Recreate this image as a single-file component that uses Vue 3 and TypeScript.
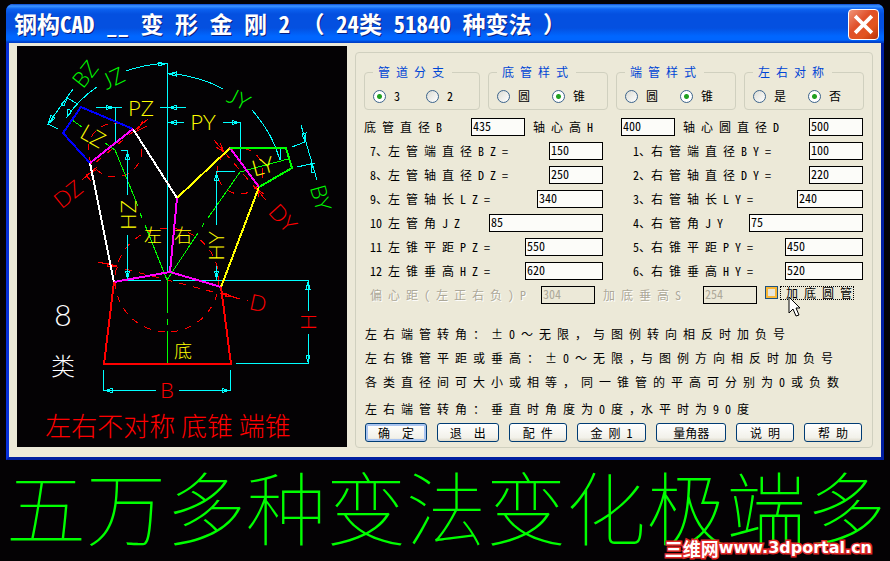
<script setup lang="ts">
import { reactive, ref } from 'vue'

interface Group {
  name: string
  title: string
  options: string[]
}

interface Field {
  id: string
  label: string
  size: string
}

const groups: Group[] = [
  { name: 'branch', title: '管 道 分 支', options: ['3', '2'] },
  { name: 'base', title: '底 管 样 式', options: ['圆', '锥'] },
  { name: 'end', title: '端 管 样 式', options: ['圆', '锥'] },
  { name: 'symmetry', title: '左 右 对 称', options: ['是', '否'] },
]

const picked = reactive<Record<string, string>>({
  branch: '3',
  base: '锥',
  end: '锥',
  symmetry: '否',
})

const values = reactive<Record<string, string>>({
  b: '435', h: '400', d: '500',
  bz: '150', dz: '250', lz: '340', jz: '85', pz: '550', hz: '620',
  by: '100', dy: '220', ly: '240', jy: '75', py: '450', hy: '520',
  p: '304', s: '254',
})

const leftFields: Field[] = [
  { id: 'bz', label: '7、左 管 端 直 径 B Z =', size: 's' },
  { id: 'dz', label: '8、左 管 轴 直 径 D Z =', size: 's' },
  { id: 'lz', label: '9、左 管 轴 长 L Z =', size: 'm' },
  { id: 'jz', label: '10 左 管 角 J Z', size: 'xl' },
  { id: 'pz', label: '11 左 锥 平 距 P Z =', size: 'l' },
  { id: 'hz', label: '12 左 锥 垂 高 H Z =', size: 'l' },
]

const rightFields: Field[] = [
  { id: 'by', label: '1、右 管 端 直 径 B Y =', size: 's' },
  { id: 'dy', label: '2、右 管 轴 直 径 D Y =', size: 's' },
  { id: 'ly', label: '3、右 管 轴 长 L Y =', size: 'm' },
  { id: 'jy', label: '4、右 管 角 J Y', size: 'xl' },
  { id: 'py', label: '5、右 锥 平 距 P Y =', size: 'l' },
  { id: 'hy', label: '6、右 锥 垂 高 H Y =', size: 'l' },
]

const notes: string[] = [
  '左 右 端 管 转 角 ： ± 0 ～ 无 限 ， 与 图 例 转 向 相 反 时 加 负 号',
  '左 右 锥 管 平 距 或 垂 高 ： ± 0 ～ 无 限 ，与 图 例 方 向 相 反 时 加 负 号',
  '各 类 直 径 间 可 大 小 或 相 等 ， 同 一 锥 管 的 平 高 可 分 别 为 0 或 负 数',
  '左 右 端 管 转 角 ： 垂 直 时 角 度 为 0 度 ，水 平 时 为 9 0 度',
]

const buttons = [
  { text: '确  定', size: 'mid', primary: true },
  { text: '退  出', size: 'mid', primary: false },
  { text: '配 件', size: 'small', primary: false },
  { text: '金 刚 1', size: 'large', primary: false },
  { text: '量角器', size: 'large', primary: false },
  { text: '说 明', size: 'small', primary: false },
  { text: '帮 助', size: 'small', primary: false },
]

const addBase = ref(false)
</script>

<template>
  <div class="screen">
    <section class="window">
      <header class="titlebar">
        <h1>钢构CAD __ 变 形 金 刚 2 （ 24类 51840 种变法 ）</h1>
        <button class="close" type="button" aria-label="关闭">
          <svg viewBox="0 0 31 31" aria-hidden="true">
            <path d="M8 8 L23 23 M23 8 L8 23" />
          </svg>
        </button>
      </header>

      <div class="body">
        <svg class="drawing" viewBox="17 46 330 401" role="img" aria-label="左右不对称 底锥 端锥">
          <g class="thin red dash">
            <circle cx="167" cy="280" r="52" />
            <circle cx="115" cy="150" r="27" />
            <circle cx="240" cy="171" r="23" />
            <path d="M98 262 L248 301" />
            <path d="M134 131 L95 163" />
            <path d="M225 153 L271 206" />
          </g>
          <g class="thin red">
            <path d="M148 119 L134 131 M143 121 L137 131 L147 126 M97 167 L82 180 M96 170 L86 175 L91 181" />
            <path d="M214 140 L225 153 M216 147 L224 152 L220 143 M256 188 L264 198 M258 190 L258 197 M258 190 L264 194" />
            <path d="M98 262 L117 266 M107 263 L107 267 L116 266 Z M222 293 L234 297 M225 293 L225 297 L231 296 Z" />
          </g>

          <g class="thin green">
            <path d="M72 120 L82 127 M105 143 L115 150 L138 206 M140 213 L142 218 M145 225 L167 280" />
            <path d="M288 159 L240 172 L208 218 M204 223 L202 227 M198 233 L167 280" />
            <path d="M167.500 279 V313 M167.500 319 V325 M167.500 331 V363" />
          </g>

          <g class="thin cyan">
            <path d="M167.500 63 V273" />
            <path d="M126 71 Q142 65 167 63 M97 87 Q79 99 67 117" />
            <path d="M67 117 L68 109 L72 111 Z M158 62 V66 L165 64 Z" />
            <path d="M167 73 Q200 76 223 89 M252 110 Q273 134 280 160" />
            <path d="M169 74 L176 72 V76 Z M280 160 L276 149 L280 148 Z" />
            <path d="M73 89 L48 124 L58 129 M67 98 L78 104 M48 124 L51 115 L55 118 Z M67 98 L61 104 L64 106 Z" />
            <path d="M96 107.500 H122 M115.500 107 V142 M106 105.500 V109.500 L114 107.500 Z M160 107.500 H186 M169 107.500 L176 105.500 V109.500 Z" />
            <path d="M167 122.500 H184 M223 122.500 H240.500 V164 M169 122.500 L176 120.500 V124.500 Z M232 120.500 V124.500 L239 122.500 Z" />
            <path d="M121 150.500 H127.500 V195 M127.500 235 V280.500 H161 M127.500 152 L125.500 159 H129.500 Z M127.500 279 L125.500 271 H129.500 Z" />
            <path d="M235 171.500 H216.500 V225 M216.500 266 V280 M216.500 173 L214.500 180 H218.500 Z M216.500 279 L214.500 271 H218.500 Z" />
            <path d="M173 280.500 H308 V311 M308 334 V363.500 H236 M308 282 L306 289 H310 Z M308 362 L306 355 H310 Z" />
            <path d="M103.500 370 V390.500 H156 M179 390.500 H230.500 V370 M105 390.500 L112 388.500 V392.500 Z M229 390.500 L222 388.500 V392.500 Z" />
            <path d="M301 125 L317 180 M292 147 L305 142 M297 167 L315 163 M305 142 L302 134 L306 133 Z M311 164 L311 173 L315 172 Z" />
          </g>

          <path class="thick blue" d="M133 129 L81 107 L63 133 L90 163" />
          <path class="thick white" d="M133 129 L177 198 M90 163 L114 282" />
          <path class="thick yellow" d="M177 198 L230 148 M259 187 L221 287" />
          <path class="thick magenta" d="M90 163 L133 129 M230 148 L259 187 M177 198 L170 272 M114 282 L170 272 L221 287" />
          <path class="thick green" d="M230 148 H286 L292 168 L259 187" />
          <path class="thick red" d="M114 282 L104 364 H231 L221 287" />

          <g class="cad">
            <text class="t-green" transform="translate(85 74) rotate(-52)" y="8">BZ</text>
            <text class="t-green" transform="translate(113 78) rotate(-26)" y="8">JZ</text>
            <text class="t-green" transform="translate(239 99) rotate(27)" y="8">JY</text>
            <text class="t-green" transform="translate(321 198) rotate(74)" y="8">BY</text>
            <text class="t-yellow" x="141" y="116">PZ</text>
            <text class="t-yellow" x="203" y="130">PY</text>
            <text class="t-yellow" transform="translate(93 136) rotate(30)" y="8">LZ</text>
            <text class="t-yellow" transform="translate(263 166) rotate(-15)" y="8">LY</text>
            <text class="t-yellow" transform="translate(128 215) rotate(-90)" y="8">HZ</text>
            <text class="t-yellow" transform="translate(216 246) rotate(-90)" y="8">HY</text>
            <text class="t-red" transform="translate(68 194) rotate(-39)" y="8">DZ</text>
            <text class="t-red" transform="translate(283 218) rotate(48)" y="8">DY</text>
            <text class="t-red" transform="translate(258 303) rotate(12)" y="8">D</text>
            <text class="t-red" transform="translate(308 322) rotate(-90)" y="8">H</text>
            <text class="t-red" x="167" y="398">B</text>
            <text class="t-white big" x="63" y="326">8</text>
          </g>
          <g class="hanzi">
            <text class="t-yellow" x="153" y="242">左</text>
            <text class="t-yellow" x="183" y="242">右</text>
            <text class="t-yellow" x="183" y="358">底</text>
            <text class="t-white kind" x="63" y="375">类</text>
            <text class="t-red caption" x="168" y="436">左右不对称  底锥  端锥</text>
          </g>
        </svg>

        <form class="panel" @submit.prevent>
          <div class="groups">
            <fieldset v-for="g in groups" :key="g.name">
              <legend>{{ g.title }}</legend>
              <div class="options">
                <label v-for="o in g.options" :key="o">
                  <input v-model="picked[g.name]" type="radio" :name="g.name" :value="o" />
                  <span>{{ o }}</span>
                </label>
              </div>
            </fieldset>
          </div>

          <div class="fields">
            <div class="line">
              <label for="b">底 管 直 径 B</label>
              <input id="b" v-model="values.b" class="s" type="text" />
              <label for="h">轴 心 高 H</label>
              <input id="h" v-model="values.h" class="s" type="text" />
              <label for="d">轴 心 圆 直 径 D</label>
              <input id="d" v-model="values.d" class="s" type="text" />
            </div>
            <div class="columns">
              <div class="column">
                <div v-for="f in leftFields" :key="f.id" class="field">
                  <label :for="f.id">{{ f.label }}</label>
                  <input :id="f.id" v-model="values[f.id]" :class="f.size" type="text" />
                </div>
              </div>
              <div class="column">
                <div v-for="f in rightFields" :key="f.id" class="field">
                  <label :for="f.id">{{ f.label }}</label>
                  <input :id="f.id" v-model="values[f.id]" :class="f.size" type="text" />
                </div>
              </div>
            </div>
            <div class="line extra">
              <label class="off" for="p">偏 心 距 ( 左 正 右 负 ) P</label>
              <input id="p" v-model="values.p" class="s" type="text" disabled />
              <label class="off" for="s">加 底 垂 高 S</label>
              <input id="s" v-model="values.s" class="s" type="text" disabled />
              <div class="check">
                <input id="add" v-model="addBase" type="checkbox" />
                <label for="add">加 底 圆 管</label>
                <svg class="cursor" viewBox="0 0 13 21" aria-hidden="true">
                  <path d="M1 1 V17 L5 13 L8 20 L11 19 L8 12 H12 Z" />
                </svg>
              </div>
            </div>
          </div>

          <div class="notes">
            <p v-for="n in notes" :key="n">{{ n }}</p>
          </div>

          <div class="actions">
            <button
              v-for="b in buttons"
              :key="b.text"
              type="button"
              :class="[b.size, { primary: b.primary }]"
            >{{ b.text }}</button>
          </div>
        </form>
      </div>
    </section>

    <footer>
      <p class="banner">五万多种变法变化极端多</p>
      <a class="mark" href="#">三维网<span>www.3dportal.cn</span></a>
    </footer>
  </div>
</template>

<style>
body {
  background: #040204;
}
</style>

<style scoped>
.screen {
  position: relative;
  padding: 4px 6px 0;
  font: 12px/18px "Noto Sans Mono CJK SC", "Liberation Serif", "Noto Sans CJK SC", sans-serif;
  color: #000;
  background: #040204;
}

.window {
  border: 3px solid #0831d9;
  border-top: 0;
  border-right-color: #001ea0;
  border-bottom-color: #001ea0;
  border-radius: 7px 7px 0 0;
  background: #ece9d8;
}

.titlebar {
  display: flex;
  align-items: center;
  justify-content: space-between;
  height: 39px;
  margin: 0 -3px;
  padding: 2px 5px 0 8px;
  box-sizing: border-box;
  border-radius: 7px 7px 0 0;
  background: linear-gradient(#0a48d0 0, #3d95ff 2px, #0c62f0 5px, #0450e0 10px, #0450e0 24px, #0066ff 32px, #0066ff 36px, #0040c8 38px);
}

h1 {
  margin: 0;
  padding-bottom: 4px;
  font-size: 23px;
  line-height: 32px;
  font-weight: bold;
  color: #fff;
  text-shadow: 1px 1px 0 #0a1f80;
  white-space: pre;
}

.close {
  width: 31px;
  height: 31px;
  padding: 0;
  border: 1px solid #fff;
  border-radius: 4px;
  background: linear-gradient(135deg, #f0957a, #e0502a 40%, #e2541f 70%, #b83008);
}

.close svg {
  display: block;
  width: 29px;
  height: 29px;
}

.close path {
  stroke: #fff;
  stroke-width: 4;
  stroke-linecap: square;
  fill: none;
}

.body {
  display: flex;
  align-items: flex-start;
  gap: 8px;
  padding: 3px 8px 9px;
}

.drawing {
  flex: none;
  width: 330px;
  height: 401px;
  background: #040204;
}

.thin,
.thick {
  fill: none;
  shape-rendering: crispEdges;
}

.thin { stroke-width: 1; }
.thick { stroke-width: 2; }
.dash { stroke-dasharray: 7 7; }
.red { stroke: #f00; }
.green { stroke: #0f0; }
.cyan { stroke: #0ff; }
.blue { stroke: #00f; }
.white { stroke: #fff; }
.yellow { stroke: #ff0; }
.magenta { stroke: #f0f; }

.cad {
  font-family: Lato, "DejaVu Sans", sans-serif;
  font-size: 22px;
  font-weight: 300;
  text-anchor: middle;
}

.hanzi {
  font-family: "Noto Sans CJK SC", sans-serif;
  font-size: 18px;
  font-weight: 300;
  text-anchor: middle;
}

.big { font-size: 30px; }
.kind { font-size: 24px; }

.caption {
  font-size: 26px;
  font-weight: 200;
  white-space: pre;
}

.t-red { fill: #f00; }
.t-green { fill: #0f0; }
.t-yellow { fill: #ff0; }
.t-white { fill: #fff; }

.panel {
  flex: 1;
  min-width: 0;
  margin-top: 6px;
  padding: 12px 8px 5px;
  border: 1px solid #d0d0bf;
  border-radius: 4px;
}

.groups {
  display: grid;
  grid-template-columns: 116fr 120fr 120fr 120fr;
  gap: 8px;
}

fieldset {
  min-width: 0;
  height: 45px;
  box-sizing: border-box;
  margin: 0;
  padding: 8px 0 0 8px;
  border: 1px solid #d0d0bf;
  border-radius: 4px;
}

legend {
  padding: 0 8px 0 5px;
  line-height: 14px;
  color: #0046d5;
  white-space: pre;
}

.options {
  display: grid;
  grid-template-columns: 1fr 1fr;
}

.options label {
  display: flex;
  align-items: center;
  gap: 8px;
  height: 18px;
}

input {
  margin: 0;
  font: inherit;
}

input[type="radio"] {
  appearance: none;
  width: 13px;
  height: 13px;
  border: 1px solid #3c648c;
  border-radius: 50%;
  background: linear-gradient(135deg, #dcdcd4, #fff);
}

input[type="radio"]:checked {
  background: radial-gradient(circle, #21a121 0 2px, #fff 3px);
}

.fields {
  display: grid;
  gap: 6px;
  margin-top: 8px;
  padding-right: 1px;
}

.fields label {
  white-space: pre;
}

input[type="text"] {
  height: 18px;
  box-sizing: border-box;
  padding: 0 1px 2px;
  border: 1px solid #000;
  border-radius: 0;
  background: #fcfcf9;
  color: #000;
}

input[type="text"]:disabled {
  background: #ece9d8;
  color: #aca899;
}

.s { width: 54px; }
.m { width: 66px; }
.l { width: 78px; }
.xl { width: 114px; }

.line {
  display: grid;
  grid-template-columns: 107px 54px 96px 54px 1fr 54px;
}

.line > input + label {
  padding-left: 8px;
}

.columns {
  display: grid;
  grid-template-columns: 239fr 230fr;
  gap: 30px;
}

.column {
  display: grid;
  gap: 6px;
}

.field {
  display: flex;
  justify-content: space-between;
}

.column:first-child .field {
  padding-left: 6px;
}

.extra {
  grid-template-columns: 171px 54px 108px 54px 1fr;
  padding-left: 6px;
}

.off {
  color: #aca899;
  text-shadow: 1px 1px 0 #fff;
}

.check {
  position: relative;
  display: flex;
  align-items: flex-start;
  gap: 2px;
  padding-left: 8px;
}

input[type="checkbox"] {
  appearance: none;
  width: 13px;
  height: 13px;
  border: 1px solid #1c5180;
  background: #e8e6dc;
  box-shadow: inset 0 0 0 2px #f8b636;
}

.check label {
  padding: 0 1px 0 5px;
  line-height: 12px;
  border: 1px dotted #000;
}

.cursor {
  position: absolute;
  left: 31px;
  top: 10px;
  width: 13px;
  height: 21px;
}

.cursor path {
  fill: #fff;
  stroke: #000;
}

.notes {
  margin-top: 18px;
}

.notes p {
  margin: 0;
  padding-left: 1px;
  line-height: 24px;
  white-space: pre;
}

.notes p:last-child {
  margin-top: 3px;
}

.actions {
  display: flex;
  gap: 10px;
  margin-top: 2px;
  padding: 0 2px 0 1px;
}

.actions button {
  height: 19px;
  min-width: 0;
  padding: 0;
  font: inherit;
  line-height: 16px;
  color: #000;
  white-space: pre;
  border: 1px solid #003c74;
  border-radius: 3px;
  background: linear-gradient(#fff, #f2f1ea 80%, #dedacb);
}

.actions .small { flex: 58 1 0; }
.actions .mid { flex: 62 1 0; }
.actions .large { flex: 70 1 0; }

.actions .primary {
  box-shadow: inset 0 0 0 2px #a9c4f0;
}

footer {
  padding-bottom: 12px;
}

.banner {
  margin: 0;
  font-family: "Noto Sans CJK SC", sans-serif;
  font-size: 80px;
  font-weight: 100;
  line-height: 88px;
  color: #0f0;
  white-space: nowrap;
}

.mark {
  position: absolute;
  right: 18px;
  bottom: 2px;
  display: flex;
  align-items: center;
  font: bold 18px/20px "Noto Sans CJK SC", sans-serif;
  color: #fff;
  text-decoration: none;
  paint-order: stroke fill;
  -webkit-text-stroke: 3px #e02828;
}

.mark span {
  font: bold 16px/20px "DejaVu Sans", sans-serif;
}
</style>
